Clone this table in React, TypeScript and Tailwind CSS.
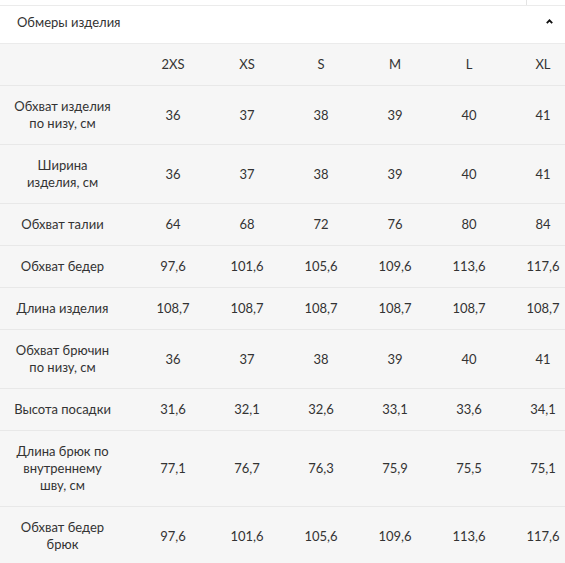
const sizes = ['2XS', 'XS', 'S', 'M', 'L', 'XL']

const rows: { label: string[]; values: string[] }[] = [
  { label: ['Обхват изделия', 'по низу, см'], values: ['36', '37', '38', '39', '40', '41'] },
  { label: ['Ширина', 'изделия, см'], values: ['36', '37', '38', '39', '40', '41'] },
  { label: ['Обхват талии'], values: ['64', '68', '72', '76', '80', '84'] },
  { label: ['Обхват бедер'], values: ['97,6', '101,6', '105,6', '109,6', '113,6', '117,6'] },
  { label: ['Длина изделия'], values: ['108,7', '108,7', '108,7', '108,7', '108,7', '108,7'] },
  { label: ['Обхват брючин', 'по низу, см'], values: ['36', '37', '38', '39', '40', '41'] },
  { label: ['Высота посадки'], values: ['31,6', '32,1', '32,6', '33,1', '33,6', '34,1'] },
  { label: ['Длина брюк по', 'внутреннему', 'шву, см'], values: ['77,1', '76,7', '76,3', '75,9', '75,5', '75,1'] },
  { label: ['Обхват бедер', 'брюк'], values: ['97,6', '101,6', '105,6', '109,6', '113,6', '117,6'] },
]

export default function App() {
  return (
    <div
      className="w-[565px] h-[563px] overflow-hidden bg-white text-[#333] text-[13px]"
      style={{ fontFamily: 'Lato, "Noto Sans", sans-serif' }}
    >
      {/* previous block edge */}
      <div className="h-[6px] border-b border-[#ebebeb] flex">
        <div className="w-[527px] border-r border-[#e4e4e4]" />
      </div>

      {/* Accordion header */}
      <div className="h-[38px] flex items-start justify-between pt-[8px] pl-[17px] pr-[12px] border-b border-[#ebebeb]">
        <span className="leading-[16px]">Обмеры изделия</span>
        <svg width="7" height="5" viewBox="0 0 7 5" className="mt-[5px]">
          <path d="M0.8 4.2 L3.5 1.3 L6.2 4.2" fill="none" stroke="#111" strokeWidth="1.8" />
        </svg>
      </div>

      {/* Table */}
      <div className="bg-[#f6f6f6] w-[580px]">
        <div className="grid grid-cols-[136px_repeat(6,74px)] h-[42px] items-center border-b border-[#e8e8e8]">
          <div />
          {sizes.map((s) => (
            <div key={s} className="text-center">
              {s}
            </div>
          ))}
        </div>

        {rows.map((row, i) => (
          <div
            key={i}
            className="grid grid-cols-[136px_repeat(6,74px)] items-center py-[12px] border-b border-[#e8e8e8] leading-[17px]"
          >
            <div className="text-center pr-[11px]">
              {row.label.map((l) => (
                <div key={l}>{l}</div>
              ))}
            </div>
            {row.values.map((v, j) => (
              <div key={j} className="text-center">
                {v}
              </div>
            ))}
          </div>
        ))}
      </div>
    </div>
  )
}
